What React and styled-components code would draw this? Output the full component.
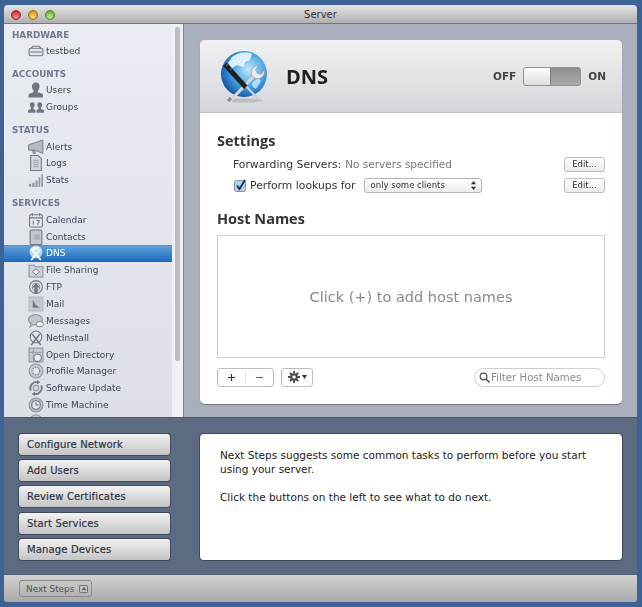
import React from 'react';
import styled, { createGlobalStyle } from 'styled-components';

const Global = createGlobalStyle`
  html, body { margin: 0; height: 100%; }
  body {
    background: #3d6396;
    font-family: "DejaVu Sans", "Liberation Sans", sans-serif;
    overflow: hidden;
  }
`;

const Desktop = styled.div`
  width: 642px;
  height: 607px;
  padding: 5px 5px 5px 4px;
  box-sizing: border-box;
`;

const Window = styled.div`
  height: 597px;
  display: flex;
  flex-direction: column;
  border-radius: 4px 4px 3px 3px;
  overflow: hidden;
  background: #5d6b82;
  filter: blur(0.35px);
`;

const TitleBar = styled.div`
  height: 19px;
  flex: none;
  position: relative;
  display: flex;
  align-items: center;
  justify-content: center;
  background: linear-gradient(#e4e4e4, #b0b0b0);
  border-bottom: 1px solid #777;
  box-sizing: border-box;
  font-size: 10px;
  color: #333;
`;

const Lights = styled.div`
  position: absolute;
  left: 7px;
  top: 5px;
  display: flex;
  gap: 7px;
`;

const Light = styled.span`
  width: 10px;
  height: 10px;
  border-radius: 50%;
  border: 1px solid ${(p) => p.$edge};
  box-sizing: border-box;
  background: radial-gradient(circle at 50% 75%, ${(p) => p.$glow}, ${(p) => p.$color} 70%);
`;

const Main = styled.div`
  height: 394px;
  flex: none;
  display: flex;
  border-bottom: 1px solid #50596a;
  box-sizing: border-box;
`;

const Sidebar = styled.div`
  width: 180px;
  flex: none;
  display: flex;
  background: linear-gradient(#e9ecf2, #dcdfe6);
  border-right: 1px solid #7c8391;
  box-sizing: border-box;
  overflow: hidden;
`;

const SourceList = styled.div`
  width: 168px;
  flex: none;
  padding-top: 2.5px;
`;

const ScrollTrack = styled.div`
  flex: 1;
  padding: 3px 3px 0 3px;
  background: #eef0f3;
`;

const ScrollThumb = styled.div`
  height: 334px;
  border-radius: 4px;
  background: #b9bcc1;
`;

const SectionHead = styled.div`
  height: 16px;
  line-height: 16px;
  padding-left: 8px;
  font-size: 8.8px;
  font-weight: 700;
  color: #6f7b8d;
  margin-top: ${(p) => (p.$first ? '0' : '6.6px')};
`;

const Row = styled.div`
  height: 16.85px;
  display: flex;
  align-items: center;
  gap: 2px;
  padding-left: 24px;
  font-size: 9px;
  white-space: nowrap;
  color: ${(p) => (p.$selected ? '#fff' : '#3c4454')};
  background: ${(p) => (p.$selected ? 'linear-gradient(#62a6e0, #1c68ba)' : 'none')};
  box-shadow: ${(p) => (p.$selected ? 'inset 0 1px 0 #4f93d2' : 'none')};
`;

const RowIcon = styled.svg`
  width: 16px;
  height: 16px;
  flex: none;
`;

const Content = styled.div`
  flex: 1;
  padding: 16px 15px 14px 16px;
  background: #a9afbc;
  box-sizing: border-box;
`;

const Card = styled.div`
  height: 364px;
  border-radius: 5px;
  background: #fff;
  overflow: hidden;
  box-shadow: 0 1px 1px #6d7482;
`;

const CardHead = styled.div`
  height: 73px;
  display: flex;
  align-items: center;
  padding: 0 16px 0 20px;
  background: linear-gradient(#f1f1f2, #d4d7db);
  border-bottom: 1px solid #bcbfc4;
  box-sizing: border-box;
`;

const CardTitle = styled.div`
  font-size: 20px;
  font-weight: 700;
  font-family: "Open Sans", "DejaVu Sans", sans-serif;
  color: #222;
  margin-left: 18px;
  flex: 1;
`;

const Toggle = styled.div`
  display: flex;
  align-items: center;
  gap: 7px;
  font-size: 10.5px;
  font-weight: 700;
  color: #444;
`;

const Track = styled.div`
  width: 58px;
  height: 19px;
  display: flex;
  border: 1px solid #8e9194;
  border-radius: 3px;
  box-sizing: border-box;
  overflow: hidden;
  background: linear-gradient(#8f8f8f, #a9a9a9);
`;

const Thumb = styled.div`
  width: 26px;
  background: linear-gradient(#fdfdfd, #dedede);
  border-right: 1px solid #808080;
`;

const CardBody = styled.div`
  padding: 18px 17px 0;
`;

const Heading = styled.div`
  font-size: 14.5px;
  font-weight: 700;
  font-family: "Open Sans", "DejaVu Sans", sans-serif;
  color: #333;
  line-height: 19px;
  margin-top: ${(p) => p.$top || '0'};
  margin-bottom: ${(p) => p.$bottom || '0'};
`;

const SettingRow = styled.div`
  height: 21px;
  display: flex;
  align-items: center;
  font-size: 10.8px;
  color: #333;
  padding-left: ${(p) => (p.$inset ? '17px' : '16px')};
`;

const Muted = styled.span`
  color: #777;
  font-size: 10.5px;
  margin-left: 4px;
  flex: 1;
`;

const Check = styled.svg`
  width: 13px;
  height: 13px;
  margin-right: 3px;
  flex: none;
`;

const Select = styled.div`
  width: 118px;
  height: 15px;
  margin-left: 8px;
  display: flex;
  align-items: center;
  justify-content: space-between;
  padding: 0 5px 0 6px;
  box-sizing: border-box;
  border: 1px solid #b5b5b5;
  border-radius: 3px;
  font-size: 8.5px;
  background: linear-gradient(#fff, #ececec);
`;

const Grow = styled.div`
  flex: 1;
`;

const SmallButton = styled.div`
  width: 41px;
  height: 15px;
  line-height: 13px;
  text-align: center;
  border: 1px solid #bdbdbd;
  border-radius: 3px;
  box-sizing: border-box;
  font-size: 8.5px;
  color: #333;
  background: linear-gradient(#fff, #ececec);
`;

const HostBox = styled.div`
  height: 123px;
  padding-top: 1px;
  display: flex;
  align-items: center;
  justify-content: center;
  border: 1px solid #cfcfcf;
  box-sizing: border-box;
  font-size: 14.5px;
  color: #8a8a8a;
`;

const Toolbar = styled.div`
  display: flex;
  align-items: center;
  margin-top: 10px;
`;

const Segmented = styled.div`
  width: 57px;
  height: 19px;
  display: flex;
  border: 1px solid #bdbdbd;
  border-radius: 3px;
  box-sizing: border-box;
`;

const Segment = styled.div`
  flex: 1;
  display: flex;
  align-items: center;
  justify-content: center;
  & + & { border-left: 1px solid #e2e2e2; margin: 3px 0; }
`;

const GearButton = styled.div`
  width: 32px;
  height: 19px;
  margin-left: 7px;
  display: flex;
  align-items: center;
  justify-content: center;
  gap: 2px;
  border: 1px solid #bdbdbd;
  border-radius: 3px;
  box-sizing: border-box;
`;

const Search = styled.div`
  width: 131px;
  height: 19px;
  margin-left: auto;
  display: flex;
  align-items: center;
  gap: 1px;
  padding-left: 4px;
  border: 1px solid #cfcfcf;
  border-radius: 10px;
  box-sizing: border-box;
  font-size: 10.2px;
  color: #868b93;
`;

const NextSteps = styled.div`
  height: 156px;
  flex: none;
  display: flex;
  padding: 16px 15px 14px;
  gap: 30px;
  box-sizing: border-box;
  background: #5d6b82;
`;

const Tasks = styled.div`
  width: 151px;
  flex: none;
  display: flex;
  flex-direction: column;
  gap: 5.2px;
`;

const Task = styled.div`
  height: 21px;
  line-height: 21px;
  padding-left: 8px;
  border-radius: 3px;
  box-sizing: border-box;
  font-size: 10px;
  letter-spacing: 0.15px;
  color: #2f3542;
  -webkit-text-stroke: 0.2px #2f3542;
  background: linear-gradient(#f2f2f2, #c4c4c4);
  box-shadow: 0 0 0 1px #3f4a5c;
`;

const Note = styled.div`
  flex: 1;
  border-radius: 4px;
  padding: 14px 20px;
  background: #fff;
  font-size: 10.5px;
  line-height: 14px;
  color: #222;
  box-shadow: 0 0 0 1px #3f4a5c;
`;

const Para = styled.p`
  margin: 0 0 14px;
`;

const Footer = styled.div`
  flex: 1;
  display: flex;
  align-items: center;
  padding-left: 15px;
  background: linear-gradient(#d2d2d2, #a9a9a9);
  border-top: 1px solid #4f5a6c;
`;

const FooterButton = styled.div`
  height: 15px;
  display: flex;
  align-items: center;
  gap: 5px;
  padding: 0 3px 0 6px;
  border: 1px solid #8c8c8c;
  border-radius: 3px;
  font-size: 8.9px;
  color: #555;
`;

const Disclosure = styled.span`
  width: 7px;
  height: 6px;
  display: flex;
  align-items: center;
  justify-content: center;
  border: 1px solid #777;
  border-radius: 1px;
  &::after {
    content: '';
    border-left: 2px solid transparent;
    border-right: 2px solid transparent;
    border-bottom: 3px solid #555;
  }
`;

const gray = '#8d95a3';
const dark = '#6f7785';

const icons = {
  server: (
    <>
      <rect x="1" y="5" width="13" height="7" rx="1.5" fill="#e4e6ea" stroke={dark} />
      <path d="M3 5l1.5-2h6L12 5M2 8.5h11" fill="none" stroke={dark} />
    </>
  ),
  user: <path d="M7.500 .5c2.300 0 3.400 1.700 3.400 3.700 0 1.700-1.100 3.200-1.700 4.100v1.200l4.800 1.800v3.200H.5v-3.200l4.800-1.800V8.300c-.6-.9-1.700-2.400-1.700-4.100C3.600 2.200 5.200.5 7.500.5z" fill={dark} />,
  group: (
    <>
      <path d="M4 3c1.500 0 2.300 1.100 2.300 2.500 0 1.100-.7 2.100-1.100 2.700v1.100L7 10.500V13H0v-2.500l2.800-1.200V8.200c-.4-.6-1.100-1.600-1.100-2.700C1.700 4.100 2.500 3 4 3z" fill={dark} />
      <path d="M11 3c1.500 0 2.300 1.100 2.300 2.500 0 1.100-.7 2.100-1.100 2.700v1.100L15 10.500V13H8v-2.500l1.800-1.200V8.200c-.4-.6-1.100-1.600-1.100-2.700C8.700 4.100 9.500 3 11 3z" fill={dark} />
    </>
  ),
  alert: <path d="M14 1v12.500L6 10.500H.5v-5L14 1zM4 10.500l1 3h2l-1-3" fill="#b4bac4" stroke={dark} strokeWidth="0.8" />,
  log: (
    <>
      <path d="M2.500.5h7l3 3v11h-10z" fill="#d5d8de" stroke={dark} />
      <path d="M5 5h5M5 7h5M5 9h5M5 11h5" stroke={gray} strokeWidth="0.8" />
    </>
  ),
  stats: <path d="M1 11h2v3H1zM4 10h2v4H4zM7 8h2v6H7zM10 5h1.500v9H10zM12.500 2H14v12h-1.500z" fill={gray} />,
  calendar: (
    <>
      <rect x="1.500" y="2.500" width="12" height="11.500" rx="1" fill="#e6e8ec" stroke={dark} />
      <path d="M1.500 5.500h12M4 1v3M11 1v3" stroke={dark} />
      <path d="M5 8v4M8 8h2.500L9 12" fill="none" stroke={dark} />
    </>
  ),
  contacts: (
    <>
      <rect x="2" y="1" width="11" height="13.500" rx="1" fill="#c3c7cf" stroke={dark} />
      <rect x="6" y="5" width="5" height="5" fill="#aab0ba" />
    </>
  ),
  dns: (
    <>
      <circle cx="7.500" cy="6.500" r="6" fill="#bcd8ef" />
      <path d="M3 3.500c2-2 6-2.500 8-1l-2 2-2 .5-1 2-3-1z" fill="#eef6fc" />
      <path d="M3 14l8.500-10M12 14L2.500 3.500" stroke="#fff" strokeWidth="1.600" />
    </>
  ),
  folder: (
    <>
      <path d="M1 3h5l1 1.500h7V14H1z" fill="#cdd1d8" stroke={gray} />
      <path d="M7.500 6.500L11 9.200 7.500 12 4 9.200z" fill="#eceef1" stroke={dark} strokeWidth="0.8" />
    </>
  ),
  ftp: (
    <>
      <circle cx="7.500" cy="7.500" r="6" fill="#e2e4e9" stroke={dark} />
      <circle cx="7.500" cy="7.500" r="3.500" fill="none" stroke={gray} />
      <path d="M7.500 3.500L11 8H9v6H6V8H4z" fill={dark} />
    </>
  ),
  mail: (
    <>
      <rect x="1" y="1" width="13" height="13" fill="#c4c8d0" stroke="#b3b8c2" />
      <path d="M4.500 3.500v7.500h6.500L7 8z" fill="#717987" />
    </>
  ),
  messages: (
    <>
      <path d="M7 1.500c3.500 0 6.500 2 6.500 4.800S10.500 11 7 11c-.8 0-1.500 0-2.200-.2L2 13l.8-3C1.500 9 .5 7.800.5 6.300.5 3.500 3.500 1.500 7 1.500z" fill="#c2c7cf" stroke={gray} />
      <ellipse cx="11" cy="10.500" rx="3.500" ry="2.500" fill="#eef0f3" stroke={dark} strokeWidth="0.8" />
    </>
  ),
  netinstall: (
    <>
      <circle cx="7.500" cy="6.500" r="5.500" fill="#e4e6ea" stroke={dark} />
      <path d="M3 14l8-10M12 14L4 4" stroke={dark} strokeWidth="1.400" />
    </>
  ),
  directory: (
    <>
      <rect x="1" y="1" width="13" height="13" fill="#c7cbd2" stroke={gray} />
      <path d="M1 5h13M5 1v13" stroke={gray} strokeWidth="0.8" />
      <circle cx="9" cy="10" r="3.500" fill="#e9ebee" stroke={dark} />
    </>
  ),
  profile: (
    <>
      <circle cx="7.500" cy="7.500" r="6.500" fill="#c6cad1" stroke={gray} />
      <circle cx="7.500" cy="7.500" r="3.500" fill="#e4e6ea" stroke={dark} strokeDasharray="1.500 1" />
    </>
  ),
  update: (
    <>
      <path d="M2.500 10A6 6 0 0 1 9.500 2M12.500 5a6 6 0 0 1-7 8" fill="none" stroke={dark} strokeWidth="1.600" />
      <path d="M8.500 0l3 2.200-3 2zM6.500 11l-3 2.200 3 2z" fill={dark} />
      <circle cx="7.500" cy="7.500" r="2.500" fill="#d8dbe0" stroke={gray} />
    </>
  ),
  time: (
    <>
      <circle cx="7.500" cy="7.500" r="6.500" fill="#b9bec7" stroke={gray} />
      <circle cx="7.500" cy="7.500" r="4" fill="#e4e6ea" stroke={dark} />
      <path d="M7.500 5v2.500H10" fill="none" stroke={dark} />
    </>
  ),
};

const sections = [
  { title: 'HARDWARE', items: [['server', 'testbed']] },
  { title: 'ACCOUNTS', items: [['user', 'Users'], ['group', 'Groups']] },
  { title: 'STATUS', items: [['alert', 'Alerts'], ['log', 'Logs'], ['stats', 'Stats']] },
  {
    title: 'SERVICES',
    items: [
      ['calendar', 'Calendar'], ['contacts', 'Contacts'], ['dns', 'DNS'], ['folder', 'File Sharing'],
      ['ftp', 'FTP'], ['mail', 'Mail'], ['messages', 'Messages'], ['netinstall', 'NetInstall'],
      ['directory', 'Open Directory'], ['profile', 'Profile Manager'], ['update', 'Software Update'],
      ['time', 'Time Machine'], ['profile', ''],
    ],
  },
];

const tasks = ['Configure Network', 'Add Users', 'Review Certificates', 'Start Services', 'Manage Devices'];

function DnsIcon() {
  return (
    <svg width="48" height="54" viewBox="0 0 48 54">
      <defs>
        <radialGradient id="globe" cx="0.6" cy="0.4" r="0.7">
          <stop offset="0" stopColor="#bfe8fa" />
          <stop offset="0.55" stopColor="#3f9fe0" />
          <stop offset="1" stopColor="#0b3f92" />
        </radialGradient>
      </defs>
      <circle cx="24" cy="25" r="23" fill="url(#globe)" />
      <path d="M12 8c5-4 13-6 20-3l-2 6-5 2-1 5-7-2-5 3-4-5z" fill="#eaf7fd" opacity="0.9" />
      <path d="M32 34l6-5 3 3-5 8-3-2z" fill="#dff2fb" opacity="0.7" />
      <ellipse cx="25" cy="51.500" rx="17" ry="2" fill="#8b8f94" opacity="0.4" />
      <path d="M10 52L34 27" stroke="#d5d8db" strokeWidth="3.200" />
      <path d="M8 52l3-3" stroke="#8e9399" strokeWidth="3.400" />
      <path d="M33.500 28.500c-4-3.500-2.500-11 5-12.500l-3 5 2 3.500 4 .5 3-4.500c1 6-4 12-11 8z" fill="#e9ebed" stroke="#8e9399" strokeWidth="0.6" />
      <path d="M26 37l13.500 14.500" stroke="#c9ccd0" strokeWidth="2.400" />
      <path d="M3 17l3.500-3.500 21 23-3.500 3.500z" fill="#1d2024" />
      <path d="M6 17l2-2M10 21l2-2" stroke="#5a6068" strokeWidth="1.200" />
    </svg>
  );
}

export default function App() {
  return (
    <Desktop>
      <Global />
      <Window>
        <TitleBar>
          <Lights>
            <Light $color="#d8333a" $glow="#ff8f8f" $edge="#8f2a2e" />
            <Light $color="#dd9a22" $glow="#ffdf7a" $edge="#9a6d1e" />
            <Light $color="#6fb43f" $glow="#c4ef90" $edge="#4f8a2c" />
          </Lights>
          Server
        </TitleBar>
        <Main>
          <Sidebar>
            <SourceList>
              {sections.map((section, i) => (
                <div key={section.title}>
                  <SectionHead $first={i === 0}>{section.title}</SectionHead>
                  {section.items.map(([icon, label]) => (
                    <Row key={label} $selected={label === 'DNS'}>
                      <RowIcon viewBox="0 0 15 15">{icons[icon]}</RowIcon>
                      {label}
                    </Row>
                  ))}
                </div>
              ))}
            </SourceList>
            <ScrollTrack><ScrollThumb /></ScrollTrack>
          </Sidebar>
          <Content>
            <Card>
              <CardHead>
                <DnsIcon />
                <CardTitle>DNS</CardTitle>
                <Toggle>OFF<Track><Thumb /></Track>ON</Toggle>
              </CardHead>
              <CardBody>
                <Heading $bottom="3.5px">Settings</Heading>
                <SettingRow>
                  Forwarding Servers:<Muted>No servers specified</Muted>
                  <SmallButton>Edit...</SmallButton>
                </SettingRow>
                <SettingRow $inset>
                  <Check viewBox="0 0 13 13">
                    <rect x="0.500" y="1.500" width="11" height="11" rx="2" fill="#b9cfe9" stroke="#7f95b3" />
                    <path d="M3 6.500l2.500 3.500L11 1" fill="none" stroke="#1c2d4a" strokeWidth="1.800" />
                  </Check>
                  Perform lookups for
                  <Select>
                    only some clients
                    <svg width="5" height="9" viewBox="0 0 5 9">
                      <path d="M2.500 0L5 3.200H0zM2.500 9L0 5.800h5z" fill="#333" />
                    </svg>
                  </Select>
                  <Grow />
                  <SmallButton>Edit...</SmallButton>
                </SettingRow>
                <Heading $top="13px" $bottom="7px">Host Names</Heading>
                <HostBox>Click (+) to add host names</HostBox>
                <Toolbar>
                  <Segmented>
                    <Segment>
                      <svg width="7" height="7" viewBox="0 0 8 8"><path d="M4 0v8M0 4h8" stroke="#333" strokeWidth="1.400" /></svg>
                    </Segment>
                    <Segment>
                      <svg width="7" height="7" viewBox="0 0 8 8"><path d="M0 4h8" stroke="#666" strokeWidth="1.400" /></svg>
                    </Segment>
                  </Segmented>
                  <GearButton>
                    <svg width="12" height="12" viewBox="0 0 12 12">
                      <circle cx="6" cy="6" r="2.800" fill="none" stroke="#444" strokeWidth="2" />
                      <path d="M6 0v2.500M6 9.500V12M0 6h2.500M9.500 6H12M1.800 1.800l1.800 1.800M8.400 8.400l1.800 1.800M10.200 1.800L8.400 3.600M3.600 8.400l-1.800 1.800" stroke="#444" strokeWidth="1.800" />
                    </svg>
                    <svg width="5" height="4" viewBox="0 0 5 4"><path d="M0 0h5L2.500 4z" fill="#333" /></svg>
                  </GearButton>
                  <Search>
                    <svg width="11" height="11" viewBox="0 0 11 11">
                      <circle cx="4.500" cy="4.500" r="3.400" fill="none" stroke="#555" strokeWidth="1.200" />
                      <path d="M7 7l3.500 3.500" stroke="#555" strokeWidth="1.600" />
                    </svg>
                    Filter Host Names
                  </Search>
                </Toolbar>
              </CardBody>
            </Card>
          </Content>
        </Main>
        <NextSteps>
          <Tasks>
            {tasks.map((task) => <Task key={task}>{task}</Task>)}
          </Tasks>
          <Note>
            <Para>Next Steps suggests some common tasks to perform before you start using your server.</Para>
            <Para>Click the buttons on the left to see what to do next.</Para>
          </Note>
        </NextSteps>
        <Footer>
          <FooterButton>Next Steps<Disclosure /></FooterButton>
        </Footer>
      </Window>
    </Desktop>
  );
}
